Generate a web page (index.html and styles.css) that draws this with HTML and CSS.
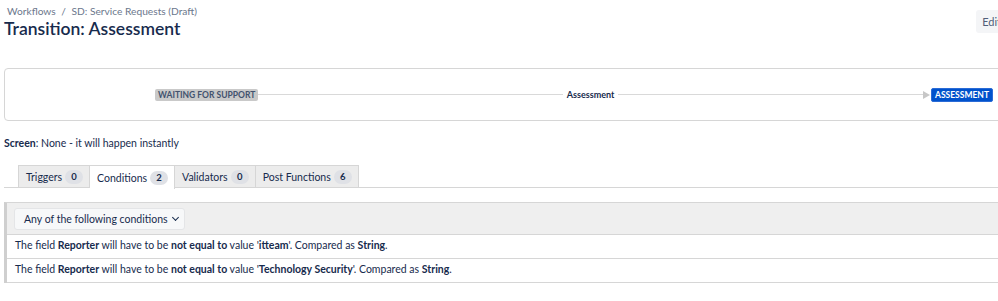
FILE: index.html
```html
<!DOCTYPE html>
<html lang="en">
<head>
    <meta charset="UTF-8">
    <meta name="viewport" content="width=device-width, initial-scale=1.0">
    <title>Transition: Assessment</title>
    <link rel="stylesheet" href="styles.css">
</head>
<body>
  <div class="page">
    <div class="page-header">
      <div>
        <div class="breadcrumbs">
          <a href="#">Workflows</a>
          <span class="sep">/</span>
          <a href="#">SD: Service Requests (Draft)</a>
        </div>
        <h1>Transition: Assessment</h1>
      </div>
      <button class="edit-btn">Edit</button>
    </div>

    <div class="diagram">
      <span class="status status-grey">WAITING FOR SUPPORT</span>
      <span class="line"></span>
      <span class="transition-name">Assessment</span>
      <span class="line"></span>
      <span class="arrow"></span>
      <span class="status status-blue">ASSESSMENT</span>
    </div>

    <p class="screen-info"><strong>Screen</strong>: None - it will happen instantly</p>

    <ul class="tabs">
      <li class="tab">Triggers <span class="badge">0</span></li>
      <li class="tab active">Conditions <span class="badge">2</span></li>
      <li class="tab">Validators <span class="badge">0</span></li>
      <li class="tab">Post Functions <span class="badge">6</span></li>
    </ul>

    <div class="conditions">
      <div class="conditions-head">
        <div class="select">Any of the following conditions <span class="chevron"></span></div>
      </div>
      <div class="condition-row">
        The field <b>Reporter</b> will have to be <b>not equal to</b> value '<b>itteam</b>'. Compared as <b>String</b>.
      </div>
      <div class="condition-row">
        The field <b>Reporter</b> will have to be <b>not equal to</b> value '<b>Technology Security</b>'. Compared as <b>String</b>.
      </div>
    </div>
  </div>
</body>
</html>
```

FILE: styles.css
```css
html, body {
  overflow: hidden;
}
body {
  margin: 0;
  font-family: Lato, "Open Sans", Arial, sans-serif;
  font-size: 10.5px;
  color: #172b4d;
  background: #fff;
}
.page {
  width: 1003px;
  padding: 0 0 0 4px;
}
.page-header {
  display: flex;
  justify-content: space-between;
  align-items: flex-start;
  height: 68px;
}
.breadcrumbs {
  padding: 5px 0 0 3px;
  font-size: 10.2px;
  line-height: 13px;
  color: #6b778c;
}
.breadcrumbs a {
  color: #6b778c;
  text-decoration: none;
}
.breadcrumbs .sep {
  margin: 0 3px;
}
h1 {
  margin: 0;
  font-size: 17.5px;
  font-weight: 600;
  line-height: 22px;
  color: #172b4d;
}
.edit-btn {
  margin: 10px 0 0;
  height: 23px;
  padding: 0 6px;
  border: none;
  border-radius: 3px;
  background: #f4f5f7;
  color: #505f79;
  font-family: inherit;
  font-size: 11px;
}
.diagram {
  display: flex;
  align-items: center;
  height: 51px;
  border: 1px solid #d6d6d6;
  border-radius: 4px;
  padding: 0 13px 0 150px;
}
.status {
  font-size: 8.5px;
  font-weight: 700;
  line-height: 12px;
  padding: 0 3px;
  border-radius: 2px;
  white-space: nowrap;
}
.status-grey {
  background: #c9c9c9;
  color: #42526e;
}
.status-blue {
  background: #0052cc;
  color: #fff;
  line-height: 12px;
  border: 1px solid #2a6bd6;
}
.line {
  flex: 1;
  height: 1px;
  background: #d9d9d9;
}
.transition-name {
  font-size: 9px;
  font-weight: 700;
  color: #172b4d;
  padding: 0 4px;
}
.arrow {
  width: 0;
  height: 0;
  border-top: 4px solid transparent;
  border-bottom: 4px solid transparent;
  border-left: 7px solid #c7c7c7;
  margin-right: 1px;
}
.screen-info {
  margin: 12px 0 0;
  line-height: 20px;
  color: #172b4d;
}
.tabs {
  display: flex;
  list-style: none;
  margin: 12px 0 0;
  padding: 0 0 0 14px;
  border-bottom: 1px solid #d6d6d6;
  height: 22px;
}
.tab {
  display: flex;
  align-items: center;
  gap: 3px;
  padding: 0 6px 0 7px;
  background: #ececec;
  border: 1px solid #d6d6d6;
  border-bottom: none;
  border-left: none;
  color: #172b4d;
}
.tab:first-child {
  border-left: 1px solid #d6d6d6;
}
.tab.active {
  background: #fff;
  height: 23px;
}
.badge {
  display: inline-block;
  min-width: 8px;
  padding: 0 5px;
  line-height: 14px;
  border-radius: 7px;
  background: #dfe1e6;
  font-size: 9.5px;
  font-weight: 700;
  text-align: center;
  color: #172b4d;
}
.conditions {
  margin-top: 14px;
  border-top: 1px solid #d6d6d6;
  border-left: 3px solid #cfcfcf;
}
.conditions-head {
  background: #efefef;
  padding: 5px 0 4px 7px;
  border-bottom: 1px solid #d6d6d6;
}
.select {
  display: inline-flex;
  align-items: center;
  gap: 5px;
  height: 20px;
  padding: 0 6px 0 9px;
  background: #f7f8f9;
  border: 1px solid #e4e5e7;
  border-radius: 3px;
  white-space: nowrap;
}
.chevron {
  width: 4px;
  height: 4px;
  border-right: 1.5px solid #172b4d;
  border-bottom: 1.5px solid #172b4d;
  transform: rotate(45deg);
  margin-top: -3px;
}
.condition-row {
  padding: 0 0 0 8px;
  height: 23px;
  line-height: 21px;
  border-bottom: 1px solid #d6d6d6;
  color: #172b4d;
}
.condition-row b {
  font-weight: 700;
}
```
